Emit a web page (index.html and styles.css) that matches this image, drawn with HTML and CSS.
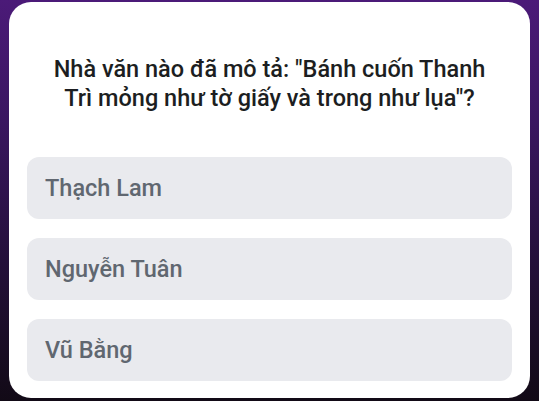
FILE: index.html
```html
<!DOCTYPE html>
<html lang="vi">
<head>
<meta charset="utf-8">
<link rel="stylesheet" href="styles.css">
</head>
<body>
<div class="stage">
  <div class="card">
    <h1 class="question">Nhà văn nào đã mô tả: "Bánh cuốn Thanh Trì mỏng như tờ giấy và trong như lụa"?</h1>
    <div class="options">
      <div class="option">Thạch Lam</div>
      <div class="option">Nguyễn Tuân</div>
      <div class="option">Vũ Bằng</div>
    </div>
  </div>
</div>
</body>
</html>
```
FILE: styles.css
```css
html, body {
  margin: 0;
  padding: 0;
}
body {
  width: 539px;
  height: 401px;
  overflow: hidden;
  background: linear-gradient(180deg, #4b1a78 0%, #3a1660 30%, #24103a 65%, #120a16 100%);
  font-family: Roboto, "Noto Sans", sans-serif;
}
.stage {
  padding: 2px 9px 3px 9px;
  height: 401px;
  box-sizing: border-box;
  display: flex;
}
.card {
  flex: 1;
  background: #ffffff;
  border-radius: 22px;
  padding: 53px 18px 17px 18px;
  display: flex;
  flex-direction: column;
}
.question {
  margin: 0 0 44px 0;
  font-size: 23.5px;
  font-weight: 500;
  line-height: 29px;
  color: #1c1e21;
  text-align: center;
  padding: 0 18px;
}
.options {
  display: flex;
  flex-direction: column;
  gap: 19px;
}
.option {
  height: 62px;
  background: #e9eaee;
  border-radius: 12px;
  display: flex;
  align-items: center;
  padding-left: 18px;
  font-size: 23.5px;
  font-weight: 500;
  color: #606770;
}
```
